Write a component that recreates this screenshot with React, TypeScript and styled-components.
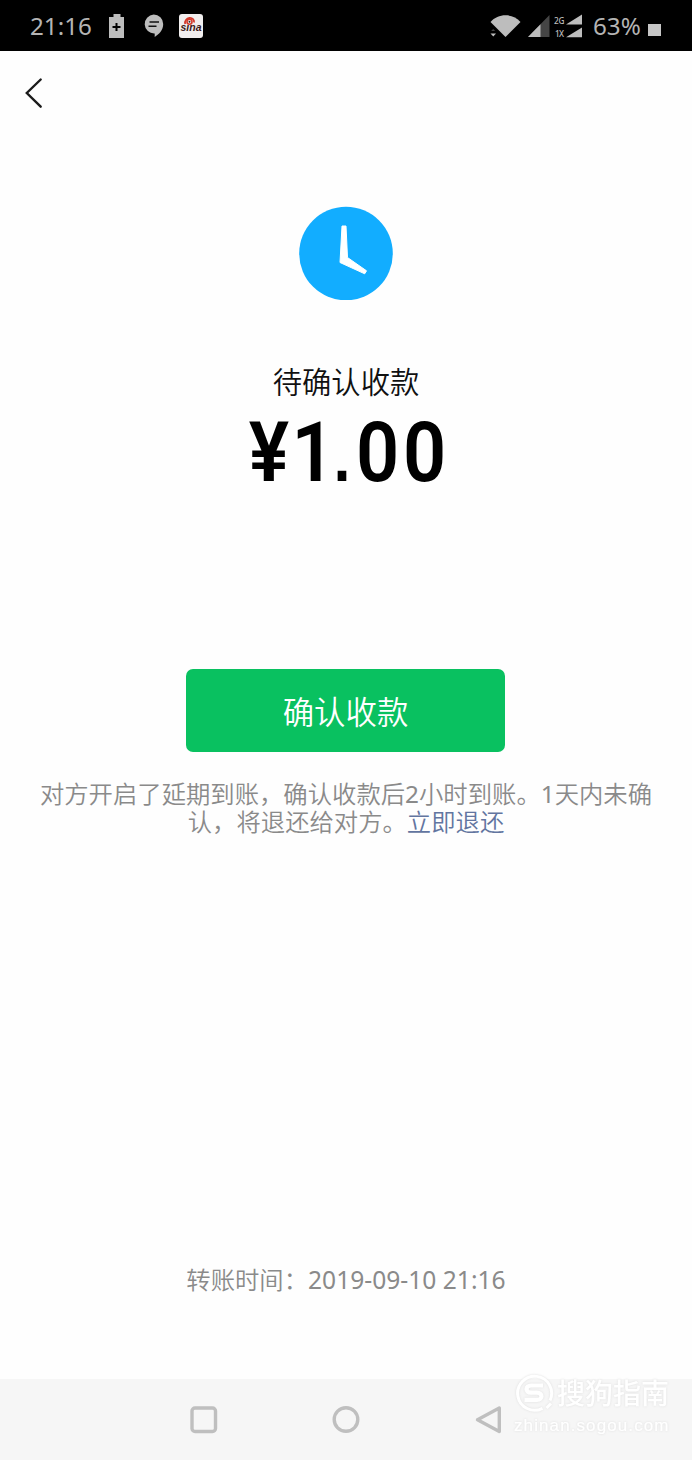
import React from "react";
import styled, { createGlobalStyle } from "styled-components";

const GlobalStyle = createGlobalStyle`
  * { box-sizing: border-box; }
  body {
    margin: 0;
    background: #fefefe;
    font-family: "Noto Sans", "Noto Sans CJK SC", sans-serif;
    font-weight: 350;
  }
`;

const Screen = styled.div`
  width: 692px;
  height: 1460px;
  display: flex;
  flex-direction: column;
  background: #fefefe;
  overflow: hidden;
`;

const StatusBar = styled.header`
  height: 51px;
  flex: none;
  display: flex;
  align-items: center;
  justify-content: space-between;
  padding: 0 30px;
  background: #000;
  color: #b4b4b4;
`;

const StatusGroup = styled.div`
  display: flex;
  align-items: center;
  height: 51px;
`;

const StatusText = styled.span<{ $width: number; $gap?: number }>`
  width: ${(p) => p.$width}px;
  margin-left: ${(p) => p.$gap ?? 0}px;
  font-size: 24.2px;
  font-weight: 400;
  line-height: 51px;
  white-space: nowrap;
`;

const Glyph = styled.svg<{ $gap?: number }>`
  display: block;
  flex: none;
  margin-left: ${(p) => p.$gap ?? 0}px;
`;

const BatteryLevel = styled.span`
  width: 13px;
  height: 12px;
  margin: 9px 1px 0 0;
  background: #c6c6c6;
`;

const TitleBar = styled.nav`
  height: 84px;
  flex: none;
  display: flex;
  align-items: center;
  padding-left: 24px;
`;

const BackButton = styled.button`
  padding: 0;
  border: 0;
  background: none;
`;

const Content = styled.main`
  flex: 1;
  display: flex;
  flex-direction: column;
  align-items: center;
  padding-top: 71px;
`;

const Status = styled.h1`
  margin: 62px 0 0;
  font-size: 29.3px;
  line-height: 40px;
  font-weight: 350;
  color: #111;
`;

const Amount = styled.div`
  margin: 9px 2px 0 0;
  height: 82px;
  display: flex;
  align-items: baseline;
  font-family: Roboto, sans-serif;
  font-size: 84px;
  line-height: 84px;
  font-weight: 600;
  color: #000;
`;

const AmountChar = styled.span<{ $width: number }>`
  width: ${(p) => p.$width}px;
  display: flex;
  justify-content: center;
  transform: scaleX(0.9);
`;

const AmountPoint = styled(AmountChar)`
  font-family: "Liberation Sans", sans-serif;
  font-size: 68px;
  font-weight: 700;
`;

const ConfirmButton = styled.button`
  width: 319px;
  height: 83px;
  margin: 176px 1px 0 0;
  padding: 0;
  border: 0;
  border-radius: 7px;
  background: #09c160;
  color: #fff;
  font-family: inherit;
  font-size: 31.4px;
  font-weight: 350;
`;

const Notice = styled.p`
  margin: 28px 0 0;
  font-size: 24.35px;
  line-height: 28px;
  text-align: center;
  white-space: nowrap;
  color: #8a8a8a;
`;

const NoticeDigit = styled.span`
  font-weight: 400;
`;

const RefundLink = styled.span`
  color: #6275a0;
`;

const TransferTime = styled.footer`
  margin-top: auto;
  margin-bottom: 82px;
  font-size: 24.35px;
  line-height: 34px;
  display: flex;
  white-space: nowrap;
  color: #8a8a8a;
`;

const TimeValue = styled.span`
  font-size: 24.6px;
  font-weight: 400;
`;

const SystemNav = styled.div`
  position: relative;
  height: 81px;
  flex: none;
  display: flex;
  align-items: center;
  justify-content: space-between;
  padding: 0 188px 0 189px;
  background: #f6f6f6;
`;

const Watermark = styled.div`
  position: absolute;
  left: 514px;
  top: -7px;
  width: 160px;
  color: #fff;
  filter: drop-shadow(0 0 1px #dedede);
`;

const WatermarkBrand = styled.div`
  display: flex;
  align-items: center;
  height: 42px;
  gap: 3px;
  font-size: 28px;
  font-weight: 500;
  line-height: 42px;
  white-space: nowrap;
`;

const WatermarkUrl = styled.div`
  font-family: "Liberation Sans", sans-serif;
  font-size: 17px;
  font-weight: 400;
  line-height: 24px;
  letter-spacing: 1.1px;
  -webkit-text-stroke: 0.2px #fff;
`;

export default function App() {
  return (
    <Screen lang="zh-CN">
      <GlobalStyle />
      <StatusBar>
        <StatusGroup>
          <StatusText $width={79}>21:16</StatusText>
          <Glyph width="16" height="24" viewBox="0 0 16 24">
            <path d="M4.5 0h7v3H15v21H0V3h4.500z" fill="#bdbdbd" />
            <path d="M7.500 9v8M3.500 13h8" stroke="#000" strokeWidth="2" />
          </Glyph>
          <Glyph $gap={19} width="20" height="24" viewBox="0 0 20 24">
            <path d="M9.700 0.500a9.500 9.500 0 0 1 9.500 9.500c0 6-4 10-8.500 13v-3.500A9.500 9.500 0 1 1 9.700.5z" fill="#bdbdbd" />
            <path d="M5.500 8H15M4.500 12.200h8" stroke="#111" strokeWidth="1.600" />
          </Glyph>
          <Glyph $gap={14} width="26" height="26" viewBox="0 0 26 26">
            <rect x="1" y="1" width="24" height="24" rx="3" fill="#f1eeee" />
            <path d="M7.200 11c-1-3 1.500-5.500 4.300-6 3-.3 5 2 4.500 4.500" fill="none" stroke="#d43a2b" strokeWidth="1.800" />
            <circle cx="11.500" cy="8.800" r="2.500" fill="#fff" stroke="#d43a2b" strokeWidth="1.600" />
            <circle cx="11.500" cy="8.800" r="1" fill="#222" />
            <text x="2.500" y="18.300" textLength="21" lengthAdjust="spacingAndGlyphs" fontFamily="Liberation Sans" fontSize="10" fontWeight="700" fontStyle="italic" fill="#3b1715">sına</text>
          </Glyph>
        </StatusGroup>
        <StatusGroup>
          <Glyph width="31" height="26" viewBox="0 0 31 26">
            <path d="M.500 9C8 0 23 0 30.500 9L15.500 24z" fill="#bdbdbd" />
            <path d="M.500 20.500H6L3.300 23.500z" fill="#bdbdbd" />
            <path d="M1.200 18l2-2 2 2z" fill="#444" />
          </Glyph>
          <Glyph $gap={7} width="22" height="22" viewBox="0 0 22 22">
            <path d="M0 22L21.500 0v22z" fill="#454545" />
            <path d="M0 22L12.500 9.200V22z" fill="#bdbdbd" />
          </Glyph>
          <Glyph $gap={3} width="30" height="26" viewBox="0 0 30 26">
            <g fill="#bdbdbd" fontFamily="Noto Sans" fontSize="8.200" fontWeight="500">
              <text x="1" y="11" textLength="10.500">2G</text>
              <text x="2" y="23.800" textLength="9">1X</text>
            </g>
            <path d="M13 11.500L29 1.500v10zM13 24.300l16-9.800v9.800z" fill="#bdbdbd" />
          </Glyph>
          <StatusText $gap={10} $width={55}>63%</StatusText>
          <BatteryLevel />
        </StatusGroup>
      </StatusBar>
      <TitleBar>
        <BackButton aria-label="返回">
          <Glyph width="20" height="32" viewBox="0 0 20 32">
            <path d="M16.700 2.500L2.800 16l13.900 13.700" fill="none" stroke="#1b1b1b" strokeWidth="2.400" strokeLinecap="round" />
          </Glyph>
        </BackButton>
      </TitleBar>
      <Content>
        <Glyph width="94" height="94" viewBox="0 0 94 94">
          <circle cx="47" cy="47.500" r="46.800" fill="#12adff" />
          <path d="M43 20h4L48.500 51.500 67.500 64.800l-1.800 3L41 56.500z" fill="#fff" stroke="#fff" strokeWidth="1" strokeLinejoin="round" />
        </Glyph>
        <Status>待确认收款</Status>
        <Amount>
          <AmountChar $width={54}>¥</AmountChar>
          <AmountChar $width={34}>1</AmountChar>
          <AmountPoint $width={24}>.</AmountPoint>
          <AmountChar $width={47}>0</AmountChar>
          <AmountChar $width={47}>0</AmountChar>
        </Amount>
        <ConfirmButton>确认收款</ConfirmButton>
        <Notice>
          对方开启了延期到账，确认收款后<NoticeDigit>2</NoticeDigit>小时到账。<NoticeDigit>1</NoticeDigit>天内未确
          <br />
          认，将退还给对方。<RefundLink>立即退还</RefundLink>
        </Notice>
        <TransferTime>
          <span>转账时间：</span>
          <TimeValue>2019-09-10 21:16</TimeValue>
        </TransferTime>
      </Content>
      <SystemNav>
        <Glyph width="30" height="30" viewBox="0 0 30 30">
          <rect x="3" y="3" width="23.500" height="23.500" rx="3" fill="none" stroke="#bfbfbf" strokeWidth="3.400" />
        </Glyph>
        <Glyph width="30" height="30" viewBox="0 0 30 30">
          <circle cx="14" cy="14.500" r="11.800" fill="none" stroke="#bfbfbf" strokeWidth="3.400" />
        </Glyph>
        <Glyph width="30" height="30" viewBox="0 0 30 30">
          <path d="M25.300 3v23.500L3.500 14.700z" fill="none" stroke="#bfbfbf" strokeWidth="3.400" strokeLinejoin="round" />
        </Glyph>
        <Watermark>
          <WatermarkBrand>
            <Glyph width="40" height="40" viewBox="0 0 40 40">
              <path d="M28.500 35.300A17 17 0 1 1 36 27.500M32.500 35l4.500-4.500" fill="none" stroke="#fff" strokeWidth="3" />
              <path d="M29 12.500H17c-6 0-6 7.200 0 7.200h6c6 0 6 7.200 0 7.200H10.500" fill="none" stroke="#fff" strokeWidth="4.200" />
            </Glyph>
            搜狗指南
          </WatermarkBrand>
          <WatermarkUrl>zhinan.sogou.com</WatermarkUrl>
        </Watermark>
      </SystemNav>
    </Screen>
  );
}
